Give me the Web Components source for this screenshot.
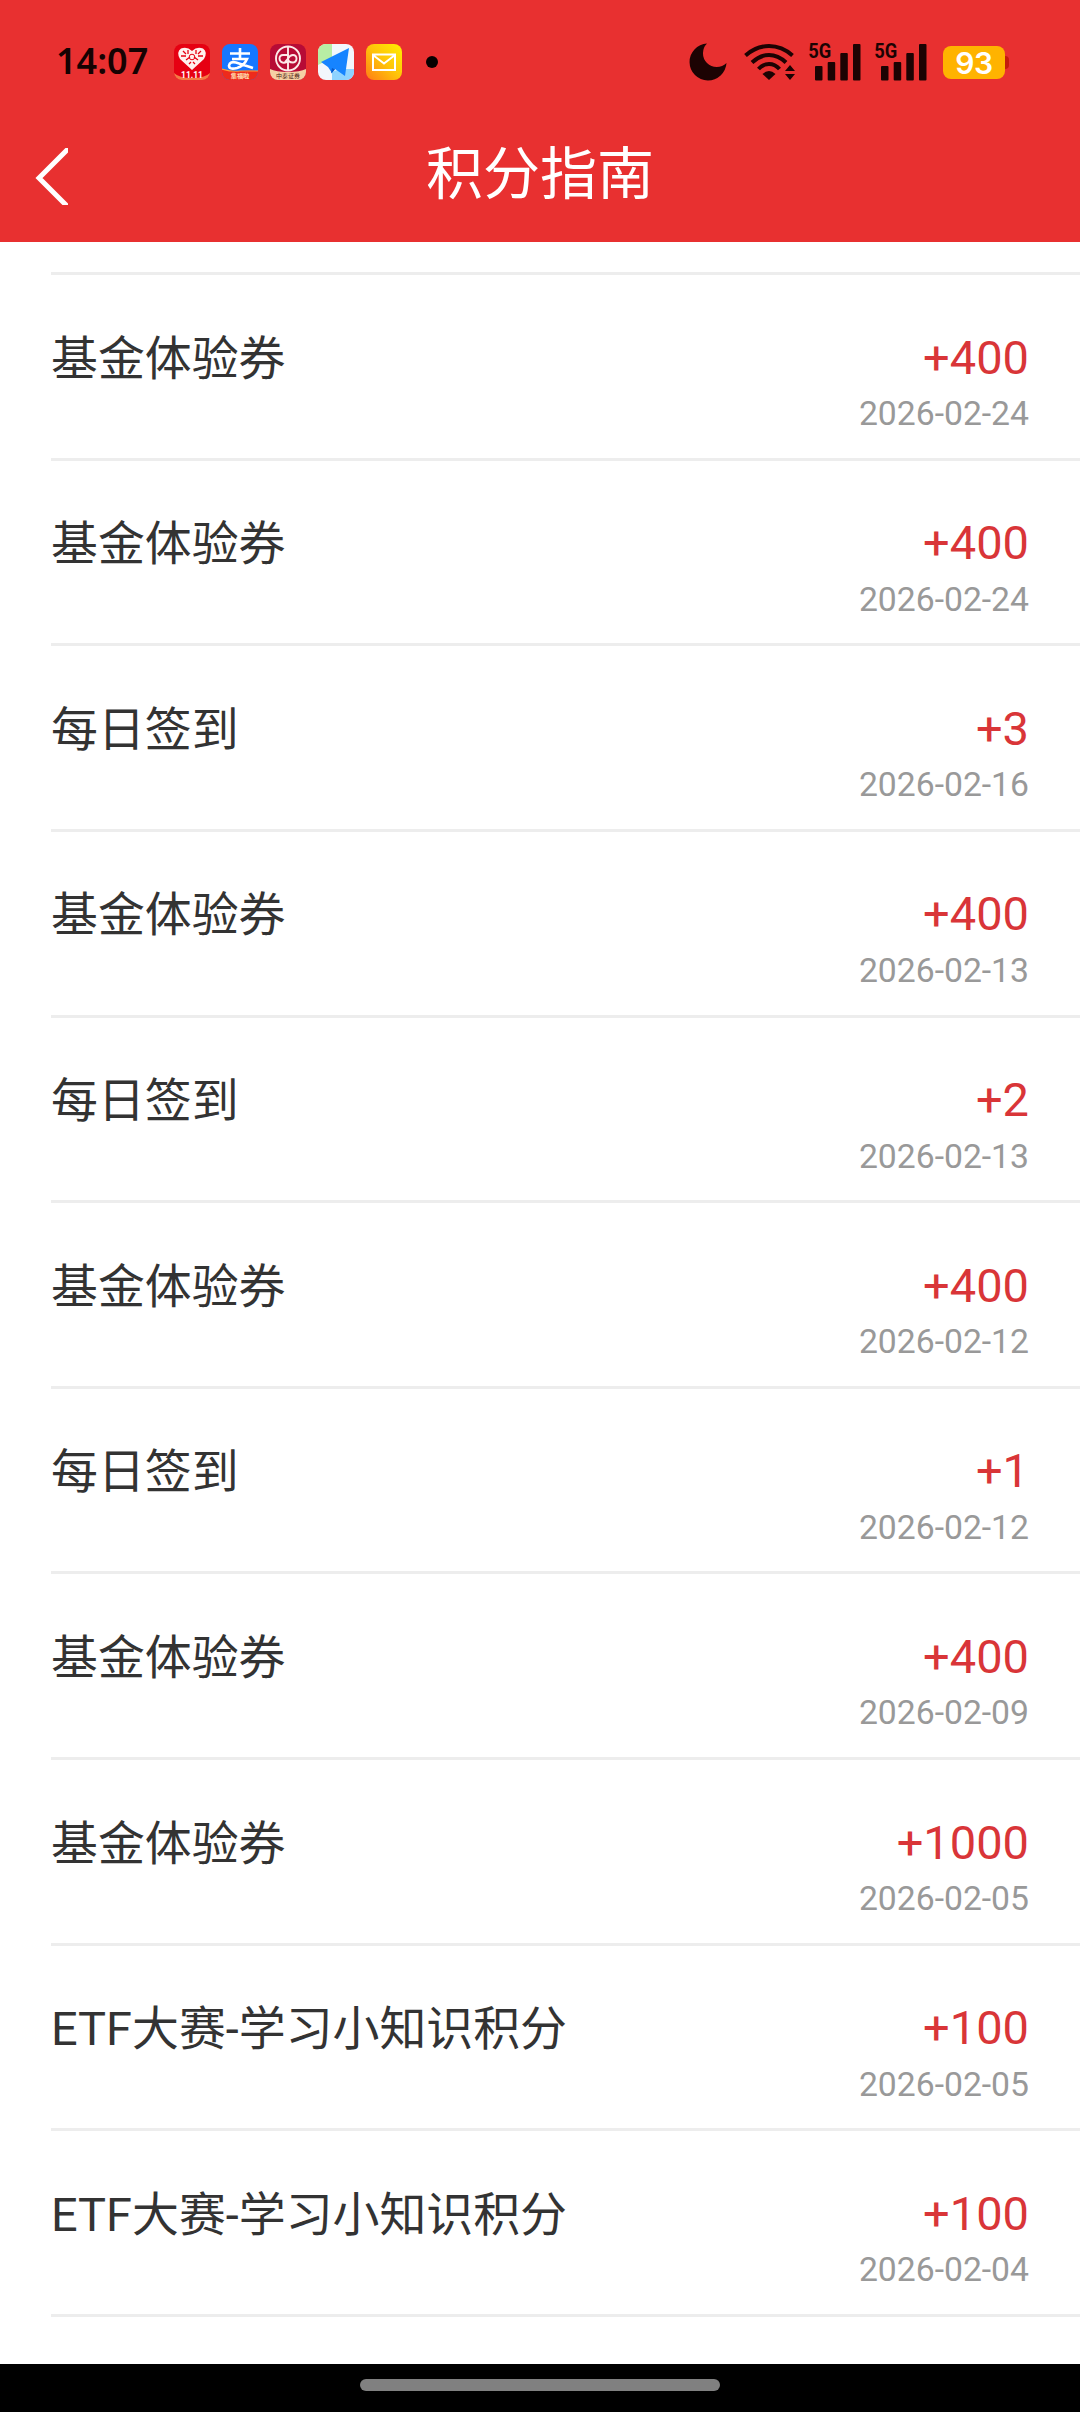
<!DOCTYPE html>
<html lang="zh-CN">
<head>
<meta charset="utf-8">
<title>积分指南</title>
<style>
html,body{margin:0;padding:0;background:#fff}
body{width:1080px;height:2412px;overflow:hidden;font-family:Roboto,"Noto Sans CJK SC",sans-serif}
</style>
</head>
<body>
<points-page></points-page>
<script>
const define = (name, html, init) => customElements.define(name, class extends HTMLElement {
  constructor() {
    super();
    const t = document.createElement('template');
    t.innerHTML = html;
    this.attachShadow({mode: 'open'}).append(t.content.cloneNode(true));
  }
  connectedCallback() { if (init) init(this, this.shadowRoot); }
});

define('app-badges', `
<style>
:host{display:flex;gap:12px;height:36px}
svg{display:block;width:36px;height:36px;border-radius:8px}
text{font-family:Roboto,"Noto Sans CJK SC",sans-serif;font-weight:700;text-anchor:middle}
</style>
<svg viewBox="0 0 36 36"><rect width="36" height="36" fill="#e60012"/>
<path d="M0 29Q5 34 18 34Q31 34 36 29V36H0Z" fill="#f47a45"/>
<path d="M18 26L6 15Q2 8 7 4.500Q13 2 18 7Q23 2 29 4.500Q34 8 30 15Z" fill="#fff0ee"/>
<path d="M9 7l3 3M14 6v4M22 6v4M27 7l-3 3M7 12h5M24 12h5M12 16l4-3M20 13l4 3M15 20l2-2M19 18l2 2" stroke="#e60012" stroke-width="1.300"/><circle cx="18" cy="13" r="2.800" fill="none" stroke="#e60012"/>
<text x="18" y="34" font-size="8.500" fill="#fff">11.11</text></svg>
<svg viewBox="0 0 36 36"><rect width="36" height="36" fill="#1677ff"/>
<g fill="none" stroke="#fff" stroke-width="2.600"><path d="M8 9.500H28M18 4V15M10 15H25Q22 22 15 24Q7 26 7 21.500Q8 17 14 18.500L31 24"/></g>
<path d="M0 25Q10 28 18 27Q28 26 36 27V36H0Z" fill="#ee2a1c"/><path d="M0 25Q10 28 18 27L36 27" fill="none" stroke="#ff9c35" stroke-width="1.200"/>
<text x="18" y="34" font-size="6.200" fill="#ffe3b5">集福啦</text></svg>
<svg viewBox="0 0 36 36"><rect width="36" height="36" fill="#b70b36"/>
<g fill="none" stroke="#fde8e8" stroke-width="1.900"><circle cx="18" cy="14.500" r="12"/><path d="M18 3V11.500M18 17.500V26"/><path d="M18 17.500Q15.500 19.300 12.500 18.500Q9.500 17.500 9.500 14.500Q9.500 11 13 11H18V14.500Q18 18.500 23 18.500Q26.500 18 26.500 14.500Q26.500 11 23 11Q20 11 18 14.500L15 18"/></g>
<path d="M0 25Q6 28 18 28Q30 28 36 25V36H0Z" fill="#f6d0a4"/>
<text x="18" y="34" font-size="6" style="font-weight:400" fill="#4a2417">中泰证券</text></svg>
<svg viewBox="0 0 36 36"><rect width="36" height="36" fill="#f2f7fc"/><path d="M0 0H14V14L0 21Z" fill="#b8eda4"/><path d="M14 36V28L22 25H36V36Z" fill="#8ed3ff"/>
<path d="M31 4L3 18L10 23L14 29L17 25L27 32Z" fill="#1684ff"/><path d="M14 24L13 29.500L17 25.500Z" fill="#0758c9"/></svg>
<svg viewBox="0 0 36 36"><defs><linearGradient id="g" x1="1" y1="0" x2="0" y2="1"><stop stop-color="#ffef00"/><stop offset=".5" stop-color="#ffc30a"/><stop offset="1" stop-color="#ff7c16"/></linearGradient></defs><rect width="36" height="36" fill="url(#g)"/>
<path d="M7 10.500H29V26H7ZM7 11L18 19.500L29 11" fill="none" stroke="#fff" stroke-width="2"/></svg>
`);

define('signal-bars', `
<style>:host{display:block;width:54px;height:44px}svg{display:block}text{font:700 21px Roboto,sans-serif}</style>
<svg width="54" height="44" viewBox="-2 -3 54 44" fill="#1c0303"><text x="-.8" y="15" textLength="23" lengthAdjust="spacingAndGlyphs">5G</text>
<rect x="6" y="23" width="7.500" height="14.500" rx="1"/><rect x="18.700" y="19" width="7.500" height="18.500" rx="1"/><rect x="31.300" y="10" width="7.500" height="27.500" rx="1"/><rect x="44" y="1" width="7.500" height="36.500" rx="1"/></svg>
`);

define('battery-level', `
<style>
:host{display:flex;align-items:center}
.cell{width:62px;height:33px;border-radius:8px;background:#ffb300;color:#fff;font:600 30px/35px Inter,sans-serif;text-align:center;letter-spacing:-.5px}
.nub{width:4px;height:13px;border-radius:0 4px 4px 0;background:#c51b0c}
</style>
<div class="cell"><slot></slot></div><div class="nub"></div>
`);

define('status-bar', `
<style>
:host{display:flex;align-items:center;height:124px;box-sizing:border-box;padding:0 71px 0 56px;color:#160202}
.time{width:118px;font:600 36px/50px "Noto Sans",sans-serif;white-space:nowrap;padding-bottom:2px}
.dot{width:12px;height:12px;border-radius:50%;background:#080000;margin-left:24px}
.right{margin-left:auto;display:flex;align-items:center}
svg{display:block}
</style>
<div class="time">14:07</div><app-badges></app-badges><div class="dot"></div>
<div class="right">
<svg width="38" height="38" viewBox="0 0 38 38"><path d="M18 .5A18.500 18.500 0 1 0 37.500 20A13.500 13.500 0 0 1 18 .5Z" fill="#1c0303"/></svg>
<svg style="margin-left:17px" width="52" height="38" viewBox="0 0 52 38"><g fill="none" stroke="#1c0303" stroke-width="4"><path d="M1.500 12.500Q12 3 25 3Q38 3 48.500 12.500"/><path d="M8 19.500Q16 12 25 12Q34 12 42 19.500"/><path d="M14.500 26Q19 21 25 21Q31 21 35.500 26"/></g><path d="M25 37L18.500 31Q25 25 31.500 31Z" fill="#1c0303"/><path d="M41 28L46 22L51 28ZM41 31H51L46 37Z" fill="#1c0303"/></svg>
<signal-bars style="margin-left:11px"></signal-bars>
<signal-bars style="margin-left:12px"></signal-bars>
<battery-level style="margin-left:16px">93</battery-level>
</div>
`);

define('title-bar', `
<style>
:host{display:grid;grid-template-columns:120px 1fr 120px;align-items:start;height:118px}
svg{display:block;margin:24px 0 0 34px}
h1{margin:3px 0 0;text-align:center;font:400 57px/84px "Noto Sans CJK SC",sans-serif;color:#fff}
</style>
<svg width="34" height="57" viewBox="-1 0 34 57"><path d="M35 -1L4 30L35 61" fill="none" stroke="#fff" stroke-width="5"/></svg>
<h1><slot></slot></h1>
`);

define('point-row', `
<style>
:host{display:flex;justify-content:space-between;box-sizing:border-box;height:185.640px;margin-left:51px;padding:52px 51px 0 0;border-bottom:3px solid #ededed}
.name{font-size:46.900px;line-height:60px;color:#333;padding-top:1.500px}
.side{text-align:right;padding-top:.5px}
.pts{font-size:47px;line-height:60px;color:#d93538}
.date{font-size:33.700px;line-height:44px;color:#999;margin-top:4.500px}
</style>
<div class="name"><slot></slot></div>
<div class="side"><div class="pts"></div><div class="date"></div></div>
`, (el, r) => {
  r.querySelector('.pts').textContent = el.getAttribute('points');
  r.querySelector('.date').textContent = el.getAttribute('date');
});

define('points-page', `
<style>
:host{display:flex;flex-direction:column;height:2412px;background:#fff}
header{background:#e83030;height:242px;flex:none}
main{flex:1;min-height:0}
.lead{margin-left:51px;height:30px;border-bottom:3px solid #ededed}
footer{height:48px;background:#000;flex:none;display:flex;justify-content:center;align-items:flex-start}
.pill{width:360px;height:12px;border-radius:6px;background:#808080;margin-top:15px}
</style>
<header><status-bar></status-bar><title-bar>积分指南</title-bar></header>
<main><div class="lead"></div>
<point-row points="+400" date="2026-02-24">基金体验券</point-row>
<point-row points="+400" date="2026-02-24">基金体验券</point-row>
<point-row points="+3" date="2026-02-16">每日签到</point-row>
<point-row points="+400" date="2026-02-13">基金体验券</point-row>
<point-row points="+2" date="2026-02-13">每日签到</point-row>
<point-row points="+400" date="2026-02-12">基金体验券</point-row>
<point-row points="+1" date="2026-02-12">每日签到</point-row>
<point-row points="+400" date="2026-02-09">基金体验券</point-row>
<point-row points="+1000" date="2026-02-05">基金体验券</point-row>
<point-row points="+100" date="2026-02-05">ETF大赛-学习小知识积分</point-row>
<point-row points="+100" date="2026-02-04">ETF大赛-学习小知识积分</point-row>
</main>
<footer><div class="pill"></div></footer>
`);
</script>
</body>
</html>
